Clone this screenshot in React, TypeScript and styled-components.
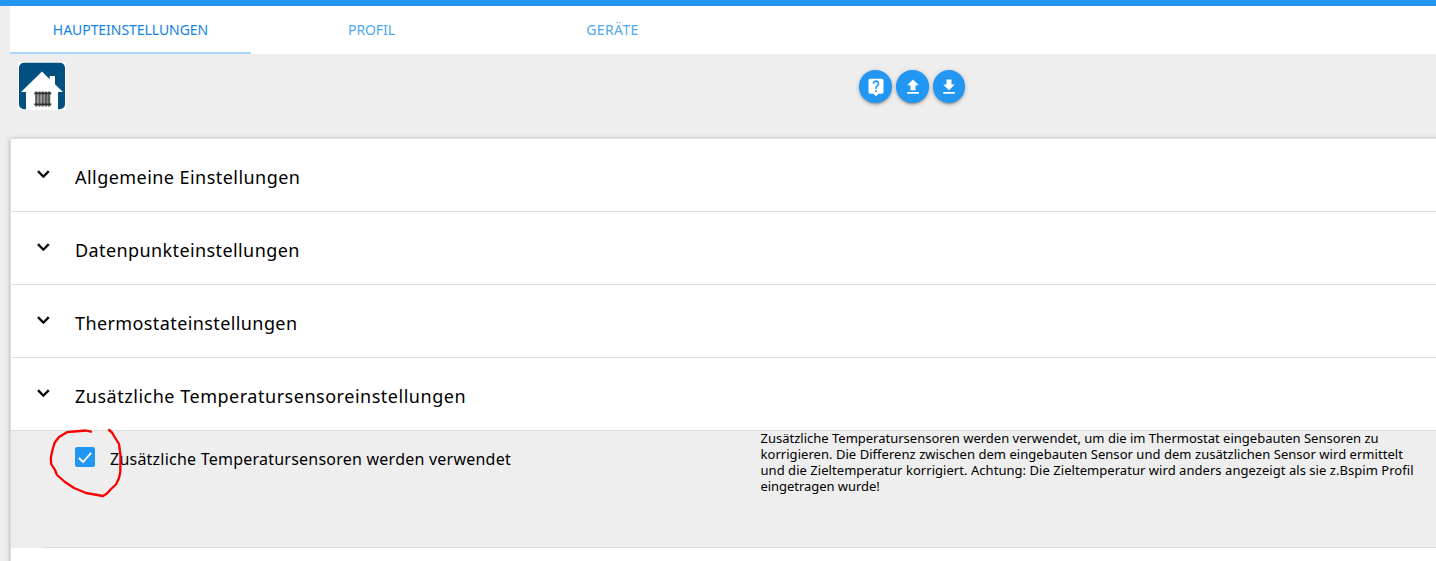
import React from "react";
import styled, { createGlobalStyle } from "styled-components";

const GlobalStyle = createGlobalStyle`
  * { box-sizing: border-box; }
  body {
    margin: 0;
    background: #eeeeee;
    color: #000;
    font-family: "Noto Sans", "Open Sans", sans-serif;
    overflow: hidden;
  }
`;

const Page = styled.div`
  height: 561px;
  padding-left: 10px;
  border-top: 6px solid #2196f3;
  overflow: hidden;
`;

const TabBar = styled.nav`
  display: flex;
  height: 48px;
  background: #fff;
`;

const Tab = styled.a<{ $active?: boolean; $spacing: number }>`
  width: 241px;
  height: 48px;
  line-height: 48px;
  text-align: center;
  font-size: 14px;
  letter-spacing: ${(p) => p.$spacing}px;
  color: ${(p) => (p.$active ? "#1484e6" : "#4fa9ee")};
  border-bottom: 2px solid ${(p) => (p.$active ? "#a6d5fa" : "transparent")};
`;

const Header = styled.header`
  display: flex;
  align-items: flex-start;
  height: 84px;
  padding: 8px 0 0 8px;
`;

const Logo = styled.svg`
  width: 48px;
  height: 48px;
`;

const Actions = styled.div`
  display: flex;
  gap: 4.2px;
  margin: 8.2px 0 0 793px;
`;

const RoundButton = styled.button`
  display: flex;
  align-items: center;
  justify-content: center;
  width: 32.7px;
  height: 32.7px;
  padding: 0;
  border: 0;
  border-radius: 50%;
  background: #2196f3;
  box-shadow: 0 2px 2px rgba(0, 0, 0, 0.14), 0 3px 1px -2px rgba(0, 0, 0, 0.12),
    0 1px 5px rgba(0, 0, 0, 0.2);
`;

const Icon = styled.svg<{ $size: number }>`
  display: block;
  flex: none;
  width: ${(p) => p.$size}px;
  height: ${(p) => p.$size}px;
  fill: currentColor;
`;

const ButtonIcon = styled(Icon)`
  margin-left: 0.6px;
  color: #fff;
`;

const Accordion = styled.main`
  width: 1500px;
  height: 500px;
  border: 1px solid #dddddd;
  border-right: 0;
  background: #fff;
  box-shadow: 0 2px 2px rgba(0, 0, 0, 0.14), 0 3px 1px -2px rgba(0, 0, 0, 0.12),
    0 1px 5px rgba(0, 0, 0, 0.2);
`;

const SectionHeader = styled.div`
  display: flex;
  height: 73px;
  padding: 23px 0 0 20px;
  gap: 20px;
  border-bottom: 1px solid #dddddd;
`;

const SectionTitle = styled.h2<{ $spacing: number }>`
  margin: 2px 0 0;
  font-size: 18px;
  line-height: 26px;
  font-weight: 400;
  letter-spacing: ${(p) => p.$spacing}px;
  white-space: nowrap;
`;

const SectionBody = styled.div`
  position: relative;
  display: flex;
  height: 117px;
  background: #eeeeee;
`;

const Option = styled.label`
  display: flex;
  width: 685px;
  padding: 16px 0 0 64px;
  gap: 15px;
`;

const Checkbox = styled.span`
  display: flex;
  width: 20px;
  height: 20px;
  border-radius: 2px;
  background: #2196f3;
`;

const OptionText = styled.span`
  line-height: 24px;
  font-size: 16px;
  letter-spacing: 0.23px;
  white-space: nowrap;
`;

const HelpText = styled.p`
  margin: -1px 0 0 64.5px;
  font-size: 13px;
  line-height: 16px;
`;

const HelpLine = styled.span<{ $spacing: number }>`
  display: block;
  letter-spacing: ${(p) => p.$spacing}px;
  white-space: nowrap;
`;

const PenMark = styled.svg`
  position: absolute;
  left: 34px;
  top: -6px;
  width: 84px;
  height: 78px;
  pointer-events: none;
`;

const Divider = styled.hr`
  height: 1px;
  margin: -1px 0 0 32px;
  border: 0;
  position: relative;
  background: #dddddd;
`;

const sections = [
  { title: "Allgemeine Einstellungen", spacing: 0.45 },
  { title: "Datenpunkteinstellungen", spacing: 0.4 },
  { title: "Thermostateinstellungen", spacing: 0.4 },
  { title: "Zusätzliche Temperatursensoreinstellungen", spacing: 0.52 },
];

const helpLines = [
  { text: "Zusätzliche Temperatursensoren werden verwendet, um die im Thermostat eingebauten Sensoren zu", spacing: 0 },
  { text: "korrigieren. Die Differenz zwischen dem eingebauten Sensor und dem zusätzlichen Sensor wird ermittelt", spacing: 0.04 },
  { text: "und die Zieltemperatur korrigiert. Achtung: Die Zieltemperatur wird anders angezeigt als sie z.Bspim Profil", spacing: 0.045 },
  { text: "eingetragen wurde!", spacing: -0.05 },
];

const actionIcons = [
  {
    label: "Hilfe",
    path: "M19 2H5c-1.11 0-2 .9-2 2v14c0 1.1.89 2 2 2h4l3 3 3-3h4c1.1 0 2-.9 2-2V4c0-1.1-.9-2-2-2zm-6 16h-2v-2h2v2zm2.07-7.75l-.9.92C13.45 11.9 13 12.5 13 14h-2v-.5c0-1.1.45-2.1 1.17-2.83l1.24-1.26c.37-.36.59-.86.59-1.41 0-1.1-.9-2-2-2s-2 .9-2 2H8c0-2.21 1.79-4 4-4s4 1.79 4 4c0 .88-.36 1.68-.93 2.25z",
  },
  { label: "Hochladen", path: "M9 16h6v-6h4l-7-7-7 7h4zm-4 2h14v2H5z" },
  { label: "Herunterladen", path: "M19 9h-4V3H9v6H5l7 7 7-7zM5 18v2h14v-2H5z" },
];

function HouseLogo() {
  return (
    <Logo viewBox="0 0 48 48">
      <rect width="48" height="48" fill="#fff" />
      <path d="M6 .8h36a5 5 0 0 1 5 5v36.400a5 5 0 0 1-5 5H6a5 5 0 0 1-5-5V5.800a5 5 0 0 1 5-5z" fill="#02507f" />
      <path d="M24 9.500L3 30h5v18h32V30h5l-8-7.800V14h-5.300v3.300z" fill="#fff" />
      <path d="M18.300 29.500v15M21.500 29.500v15M24.700 29.500v15M27.900 29.500v15M31.100 29.500v15" stroke="#5c5c5c" strokeWidth="2.300" />
      <path d="M19.900 30.500v13M23.100 30.500v13M26.300 30.500v13M29.500 30.500v13" stroke="#888" strokeWidth="1" />
      <path d="M16.300 31.300h17M16.300 42.300h17" stroke="#2f2f2f" strokeWidth="1.700" />
    </Logo>
  );
}

export default function App() {
  return (
    <>
      <GlobalStyle />
      <Page>
        <TabBar>
          <Tab $active $spacing={-0.05}>HAUPTEINSTELLUNGEN</Tab>
          <Tab $spacing={-0.1}>PROFIL</Tab>
          <Tab $spacing={0.35}>GERÄTE</Tab>
        </TabBar>
        <Header>
          <HouseLogo />
          <Actions>
            {actionIcons.map((a) => (
              <RoundButton key={a.label} aria-label={a.label}>
                <ButtonIcon $size={20} viewBox="0 0 24 24">
                  <path d={a.path} />
                </ButtonIcon>
              </RoundButton>
            ))}
          </Actions>
        </Header>
        <Accordion>
          {sections.map((s) => (
            <SectionHeader key={s.title}>
              <Icon $size={24} viewBox="-0.4 0 24 24">
                <path
                  d="M16.590 8.590L12 13.170 7.410 8.590 6 10l6 6 6-6z"
                  stroke="currentColor"
                  strokeWidth="0.4"
                />
              </Icon>
              <SectionTitle $spacing={s.spacing}>{s.title}</SectionTitle>
            </SectionHeader>
          ))}
          <SectionBody>
            <Option>
              <Checkbox>
                <Icon $size={20} viewBox="0 0 20 20">
                  <path d="M3.900 11l4.200 4 8-9.200" fill="none" stroke="#fff" strokeWidth="1.900" />
                </Icon>
              </Checkbox>
              <OptionText>Zusätzliche Temperatursensoren werden verwendet</OptionText>
            </Option>
            <HelpText>
              {helpLines.map((l) => (
                <HelpLine key={l.text} $spacing={l.spacing}>{l.text}</HelpLine>
              ))}
            </HelpText>
            <PenMark viewBox="45 425 84 78">
              <path
                d="M91 431.700L86 430.500L74 431.500L67 432.200L59 437L54.500 443L52.500 450L50.800 458L51.200 464L55 470L57 475L65 482L74 488L86 493L103 496L107 493.500L111 489L116 484.500L119 478L120.300 472L120.500 455L119 444L114 436L112 432.500L109 430"
                fill="none"
                stroke="#fa0000"
                strokeWidth="2.300"
                strokeLinecap="round"
                strokeLinejoin="round"
              />
            </PenMark>
          </SectionBody>
          <Divider />
        </Accordion>
      </Page>
    </>
  );
}
